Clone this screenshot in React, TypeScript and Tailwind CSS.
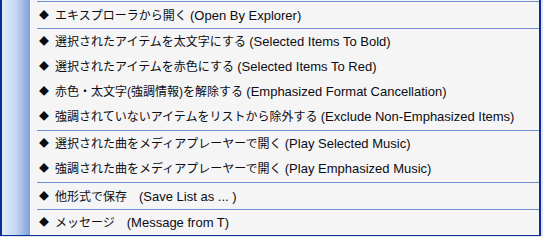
import { Fragment } from "react";

// [japanese part, english part]
const groups: [string, string][][] = [
  [["エキスプローラから開く ", "(Open By Explorer)"]],
  [
    ["選択されたアイテムを太文字にする ", "(Selected Items To Bold)"],
    ["選択されたアイテムを赤色にする ", "(Selected Items To Red)"],
    ["赤色・太文字(強調情報)を解除する ", "(Emphasized Format Cancellation)"],
    ["強調されていないアイテムをリストから除外する ", "(Exclude Non-Emphasized Items)"],
  ],
  [
    ["選択された曲をメディアプレーヤーで開く ", "(Play Selected Music)"],
    ["強調された曲をメディアプレーヤーで開く ", "(Play Emphasized Music)"],
  ],
  [["他形式で保存　", "(Save List as ... )"]],
  [["メッセージ　", "(Message from T)"]],
];

export default function App() {
  return (
    <div className="w-[543px] h-[237px] bg-[#e4e6ea] overflow-hidden">
      <div className="w-[541px] h-[236px] flex border-l-2 border-r-2 border-b border-[#0b2c9a] bg-[#f5f5f5]">
        <div className="w-[28px] shrink-0 bg-gradient-to-r from-[#e3ecfa] via-[#c4d6f3] to-[#7f9fdb]" />
        <div
          className="flex-1 pt-[1px] text-[13px] text-[#0c0c14]"
          style={{ fontFamily: '"Liberation Sans", "Noto Sans CJK JP", sans-serif' }}
        >
          {groups.map((rows, gi) => (
            <Fragment key={gi}>
              <div className="ml-[7px] h-px bg-[#6f8fd3]" />
              <div className={gi === 1 || gi === 2 ? "pb-[1px]" : gi === 0 || gi === 3 ? "pt-[1px]" : ""}>
                {rows.map(([jp, en]) => (
                  <div key={en} className="h-[25px] flex items-center pl-[9px] whitespace-pre">
                    <span className="text-[10px] mr-[6px] leading-none">◆</span>
                    <span className="text-[12px]">{jp}</span>
                    <span>{en}</span>
                  </div>
                ))}
              </div>
            </Fragment>
          ))}
        </div>
      </div>
    </div>
  );
}
